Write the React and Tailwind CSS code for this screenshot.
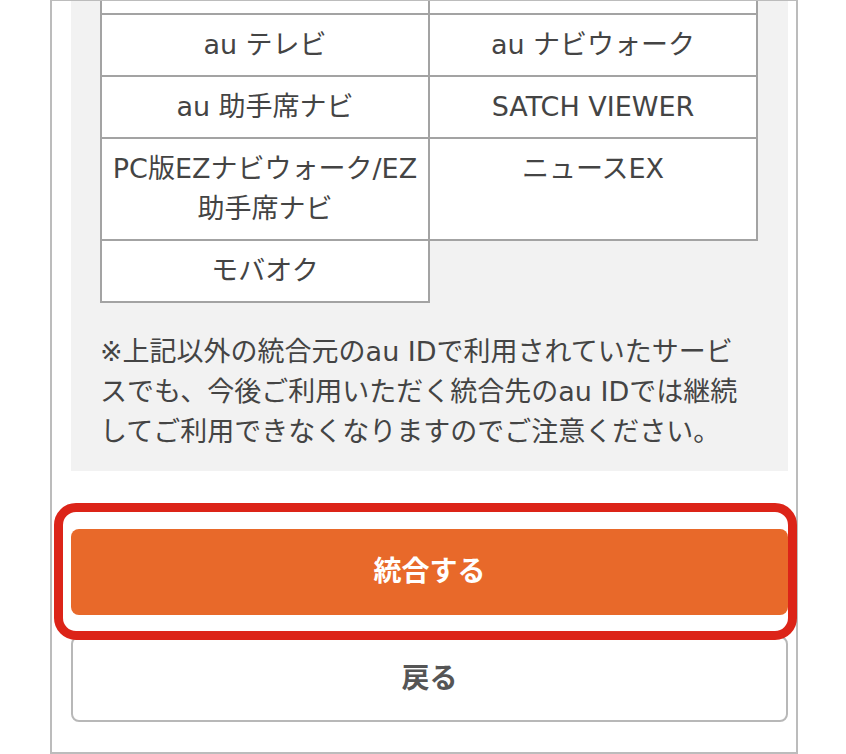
import React from 'react';

const services = [
  ['au テレビ', 'au ナビウォーク'],
  ['au 助手席ナビ', 'SATCH VIEWER'],
  [
    <>
      PC版EZナビウォーク/EZ
      <br />
      助手席ナビ
    </>,
    'ニュースEX',
  ],
  ['モバオク', null],
];

const noteLines = [
  '※上記以外の統合元のau IDで利用されていたサービ',
  'スでも、今後ご利用いただく統合先のau IDでは継続',
  'してご利用できなくなりますのでご注意ください。',
];

const fontStack = { fontFamily: '"DejaVu Sans", "Noto Sans CJK JP", sans-serif' };

const App = () => {
  return (
    <div className="relative w-[846px] h-[754px] overflow-hidden bg-white" style={fontStack}>
      {/* Frame */}
      <div className="ml-[50px] w-[748px] h-[754px] border-x-2 border-t border-b-2 border-[#bcbcbc] pl-[19px] pr-[8px]">
        {/* Info panel */}
        <div className="bg-[#f2f2f2] pl-[29px] pr-[30px] pb-[19px]">
          <div className="grid grid-cols-[330px_328px] text-[27px] leading-[40px] text-[#444] text-center">
            {/* cropped top row */}
            <div className="h-[14px] bg-white border-l-2 border-r-2 border-b-2 border-[#a3a3a3]" />
            <div className="h-[14px] bg-white border-r-2 border-b-2 border-[#a3a3a3]" />
            {services.map(([left, right], idx) => (
              <React.Fragment key={idx}>
                <div className="bg-white border-l-2 border-r-2 border-b-2 border-[#a3a3a3] py-[10px] whitespace-nowrap">
                  {left}
                </div>
                {right ? (
                  <div className="bg-white border-r-2 border-b-2 border-[#a3a3a3] py-[10px] whitespace-nowrap">
                    {right}
                  </div>
                ) : (
                  <div />
                )}
              </React.Fragment>
            ))}
          </div>
          <div className="mt-[29px] text-[27px] leading-[40px] text-[#444] whitespace-nowrap">
            {noteLines.map((line) => (
              <div key={line}>{line}</div>
            ))}
          </div>
        </div>

        {/* Buttons */}
        <button className="mt-[58px] w-full h-[86px] rounded-[8px] bg-[#e8692a] text-white text-[28px] font-bold flex items-center justify-center">
          統合する
        </button>
        <button className="mt-[21px] w-full h-[86px] rounded-[8px] bg-white border-2 border-[#b8b8b8] text-[#555] text-[28px] font-bold flex items-center justify-center">
          戻る
        </button>
      </div>

      {/* Highlight annotation */}
      <div className="absolute left-[54px] top-[503px] w-[743px] h-[137px] border-[9px] border-[#dc2418] rounded-[22px] pointer-events-none" />
    </div>
  );
};

export default App;
